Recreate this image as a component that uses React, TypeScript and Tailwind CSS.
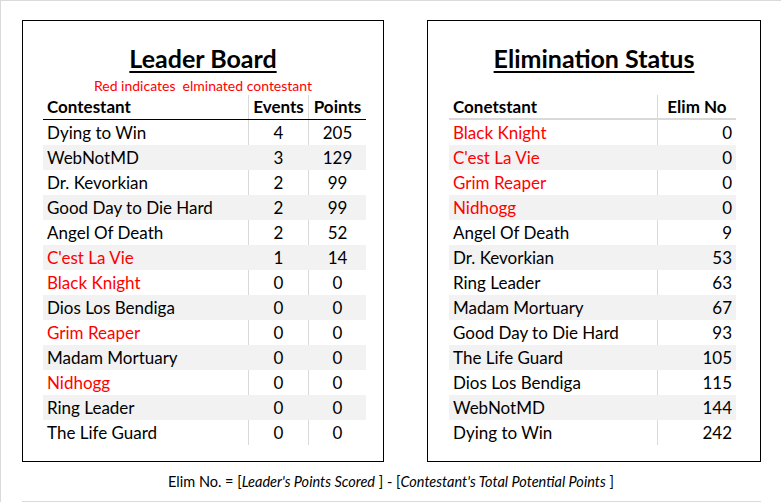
import React from "react";

type LeaderRow = { name: string; events: number; points: number; out: boolean };
type ElimRow = { name: string; elim: number; out: boolean };

const leaders: LeaderRow[] = [
  { name: "Dying to Win", events: 4, points: 205, out: false },
  { name: "WebNotMD", events: 3, points: 129, out: false },
  { name: "Dr. Kevorkian", events: 2, points: 99, out: false },
  { name: "Good Day to Die Hard", events: 2, points: 99, out: false },
  { name: "Angel Of Death", events: 2, points: 52, out: false },
  { name: "C'est La Vie", events: 1, points: 14, out: true },
  { name: "Black Knight", events: 0, points: 0, out: true },
  { name: "Dios Los Bendiga", events: 0, points: 0, out: false },
  { name: "Grim Reaper", events: 0, points: 0, out: true },
  { name: "Madam Mortuary", events: 0, points: 0, out: false },
  { name: "Nidhogg", events: 0, points: 0, out: true },
  { name: "Ring Leader", events: 0, points: 0, out: false },
  { name: "The Life Guard", events: 0, points: 0, out: false },
];

const eliminations: ElimRow[] = [
  { name: "Black Knight", elim: 0, out: true },
  { name: "C'est La Vie", elim: 0, out: true },
  { name: "Grim Reaper", elim: 0, out: true },
  { name: "Nidhogg", elim: 0, out: true },
  { name: "Angel Of Death", elim: 9, out: false },
  { name: "Dr. Kevorkian", elim: 53, out: false },
  { name: "Ring Leader", elim: 63, out: false },
  { name: "Madam Mortuary", elim: 67, out: false },
  { name: "Good Day to Die Hard", elim: 93, out: false },
  { name: "The Life Guard", elim: 105, out: false },
  { name: "Dios Los Bendiga", elim: 115, out: false },
  { name: "WebNotMD", elim: 144, out: false },
  { name: "Dying to Win", elim: 242, out: false },
];

function LeaderBoard() {
  return (
    <div className="w-[362px] h-[442px] border border-black flex flex-col items-center">
      <h1 className="mt-[22px] h-[30px] leading-[30px] text-[25px] font-bold underline decoration-2 underline-offset-[3px]">
        Leader Board
      </h1>
      <p className="mt-[4px] h-[17px] leading-[17px] text-[14px] text-[#ff0000]">
        Red indicates&nbsp; elminated contestant
      </p>

      <div className="mt-[1px] w-[323px] self-start ml-[20px] text-[17px]">
        <div className="flex h-[25px] items-center font-bold border-b border-black">
          <div className="w-[206px] h-full flex items-center pl-[4px] border-r border-[#d9d9d9]">Contestant</div>
          <div className="w-[60px] h-full flex items-center justify-center border-r border-[#d9d9d9]">Events</div>
          <div className="flex-1 h-full flex items-center justify-center">Points</div>
        </div>
        {leaders.map((row, i) => {
          const shaded = i % 2 === 1;
          const line = shaded ? "border-[#f2f2f2]" : "border-[#d9d9d9]";
          return (
            <div key={row.name} className={`flex h-[25px] ${shaded ? "bg-[#f2f2f2]" : "bg-white"}`}>
              <div className={`w-[206px] flex items-center pl-[4px] border-r ${line} ${row.out ? "text-[#ff0000]" : ""}`}>
                {row.name}
              </div>
              <div className={`w-[60px] flex items-center justify-center border-r ${line}`}>{row.events}</div>
              <div className="flex-1 flex items-center justify-center">{row.points}</div>
            </div>
          );
        })}
      </div>
    </div>
  );
}

function EliminationStatus() {
  return (
    <div className="w-[334px] h-[442px] border border-black flex flex-col items-center">
      <h1 className="mt-[22px] h-[30px] leading-[30px] text-[25px] font-bold underline decoration-2 underline-offset-[3px]">
        Elimination Status
      </h1>

      <div className="mt-[22px] w-[287px] self-start ml-[21px] text-[17px]">
        <div className="flex h-[25px] items-center font-bold border-b-2 border-[#d9d9d9]">
          <div className="w-[209px] h-full flex items-center pl-[4px] border-r border-[#d9d9d9]">Conetstant</div>
          <div className="flex-1 h-full flex items-center justify-center">Elim No</div>
        </div>
        {eliminations.map((row, i) => {
          const shaded = i % 2 === 1;
          return (
            <div key={row.name} className={`flex h-[25px] ${shaded ? "bg-[#f2f2f2]" : "bg-white"}`}>
              <div
                className={`w-[209px] flex items-center pl-[4px] border-r ${shaded ? "border-[#f2f2f2]" : "border-[#d9d9d9]"} ${row.out ? "text-[#ff0000]" : ""}`}
              >
                {row.name}
              </div>
              <div className="flex-1 flex items-center justify-end pr-[4px]">{row.elim}</div>
            </div>
          );
        })}
      </div>
    </div>
  );
}

export default function App() {
  return (
    <div className="w-[781px] h-[502px] bg-white border-t border-l border-[#dadada] flex flex-col text-black font-['Lato',sans-serif]">
      <div className="flex pt-[19px] pl-[21px] gap-[43px]">
        <LeaderBoard />
        <EliminationStatus />
      </div>
      <p className="h-[39px] flex items-center justify-center text-[14.5px]">
        Elim No. = [<i>Leader's Points Scored</i>&nbsp;] - [<i>Contestant's Total Potential Points</i>&nbsp;]
      </p>
      <div className="ml-[21px] w-[739px] h-px bg-[#dadada]" />
    </div>
  );
}
